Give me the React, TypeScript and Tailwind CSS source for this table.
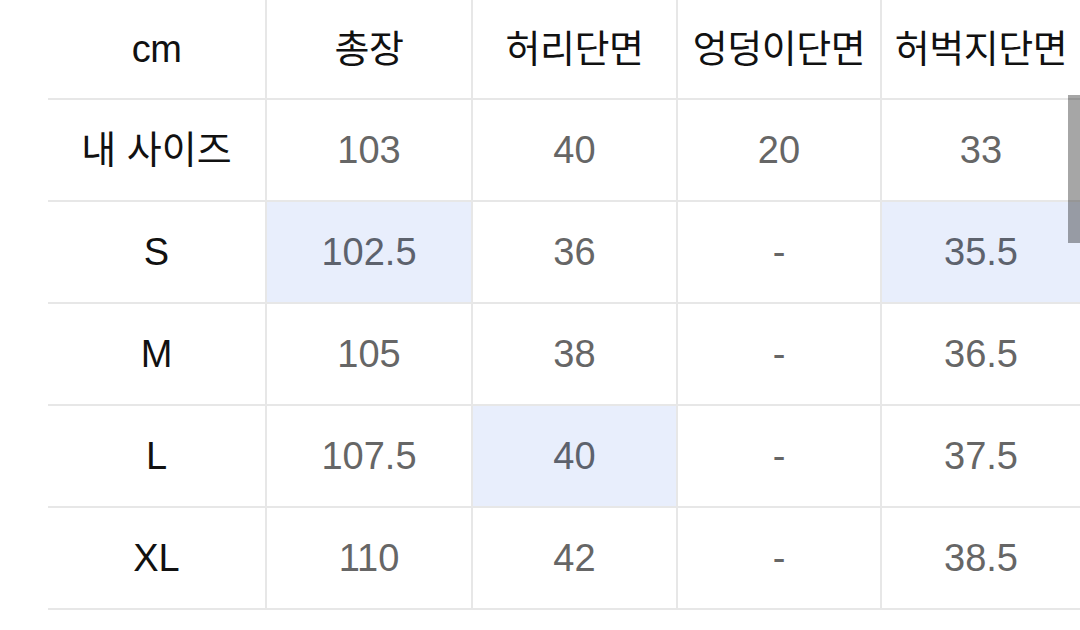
const HEAD = ["cm", "총장", "허리단면", "엉덩이단면", "허벅지단면"];

const ROWS: { label: string; cells: string[]; hi: number[] }[] = [
  { label: "내 사이즈", cells: ["103", "40", "20", "33"], hi: [] },
  { label: "S", cells: ["102.5", "36", "-", "35.5"], hi: [0, 3] },
  { label: "M", cells: ["105", "38", "-", "36.5"], hi: [] },
  { label: "L", cells: ["107.5", "40", "-", "37.5"], hi: [1] },
  { label: "XL", cells: ["110", "42", "-", "38.5"], hi: [] },
];

const COLS = "grid grid-cols-[217px_206px_205px_204px_200px]";

export default function App() {
  return (
    <div
      className="relative w-[1080px] h-[630px] overflow-hidden bg-white"
      style={{ fontFamily: '"Liberation Sans", "Noto Sans CJK KR", sans-serif' }}
    >
      <div className="pl-[48px]">
        <div className={COLS}>
          {HEAD.map((h, i) => (
            <div
              key={h}
              className={
                "h-[100px] flex items-center justify-center border-b-2 border-[#e7e7e7] text-[38px] text-[#111] tracking-[-0.5px] whitespace-nowrap " +
                (i > 0 ? "border-l-2" : "")
              }
            >
              {h}
            </div>
          ))}
        </div>
        {ROWS.map((r) => (
          <div key={r.label} className={COLS}>
            <div className="h-[102px] flex items-center justify-center border-b-2 border-[#e7e7e7] text-[38px] text-[#111] whitespace-nowrap">
              {r.label}
            </div>
            {r.cells.map((c, j) => (
              <div
                key={j}
                className={
                  "h-[102px] flex items-center justify-center border-b-2 border-l-2 border-[#e7e7e7] text-[38px] " +
                  (r.hi.includes(j) ? "bg-[#e8eefc] text-[#5d626d]" : "text-[#666]")
                }
              >
                {c}
              </div>
            ))}
          </div>
        ))}
      </div>
      <div className="absolute right-0 top-[95px] w-[12px] h-[148px] bg-black/35" />
    </div>
  );
}
